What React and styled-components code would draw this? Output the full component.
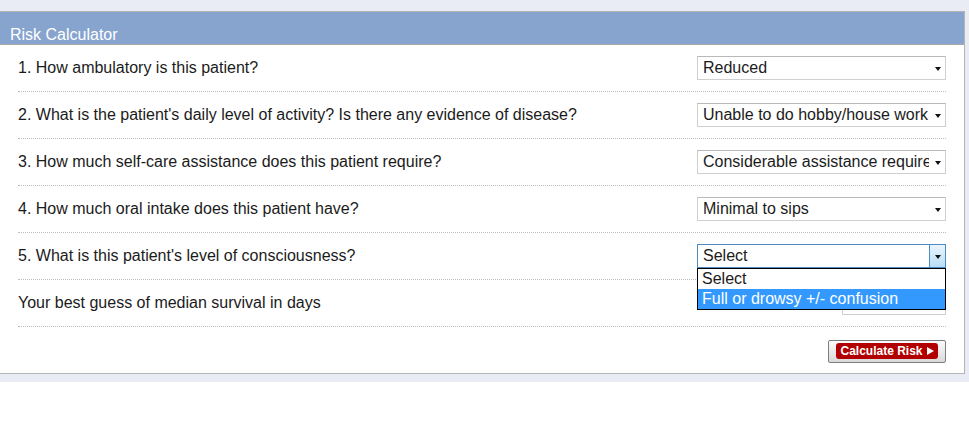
import React from "react";
import styled, { createGlobalStyle } from "styled-components";

const Global = createGlobalStyle`
  html, body { margin: 0; padding: 0; background: #ffffff; }
  body { font-family: "Liberation Sans", Arial, sans-serif; color: #1b1b1b; }
`;

const Page = styled.div`
  width: 969px;
  background: #e9ecf4;
  padding: 11px 4px 8px 0;
  box-sizing: border-box;
`;

const Panel = styled.div`
  background: #ffffff;
  border-top: 1px solid #b4b4b4;
  border-right: 1px solid #b4b4b4;
  border-bottom: 1px solid #b4b4b4;
`;

const Header = styled.div`
  height: 33px;
  background: #87a4cf;
  border-bottom: 1px solid #a9a9a9;
  color: #ffffff;
  font-size: 16px;
  padding: 14px 0 0 10px;
  box-sizing: border-box;
  line-height: 18px;
`;

const Rows = styled.div`
  padding: 0 18px;
`;

const Row = styled.div`
  height: 46px;
  display: flex;
  align-items: center;
  justify-content: space-between;
  border-bottom: 1px dotted #bdbdbd;
  font-size: 16px;
  position: relative;
  z-index: ${(p) => (p.$raised ? 2 : "auto")};
`;

const Label = styled.span`
  line-height: 18px;
`;

const SelectBox = styled.div`
  position: relative;
  width: 249px;
  height: 24px;
  box-sizing: border-box;
  border: 1px solid ${(p) => (p.$focus ? "#4b8cc4" : "#cfcfcf")};
  border-top-color: ${(p) => (p.$focus ? "#4b8cc4" : "#b9b9b9")};
  background: #fff;
  display: flex;
  align-items: center;
  font-size: 16px;
  color: #1b1b1b;
`;

const SelectText = styled.span`
  flex: 1;
  padding-left: 5px;
  white-space: nowrap;
  overflow: hidden;
  line-height: 22px;
`;

const ArrowArea = styled.span`
  width: 16px;
  height: 22px;
  flex: none;
  display: flex;
  align-items: center;
  justify-content: center;
  box-sizing: border-box;
  background: ${(p) => (p.$focus ? "linear-gradient(#eaf5fd, #b9ddf5)" : "transparent")};
  border-left: ${(p) => (p.$focus ? "1px solid #4b8cc4" : "1px solid transparent")};
`;

const Caret = styled.span`
  width: 0;
  height: 0;
  border-left: 3.5px solid transparent;
  border-right: 3.5px solid transparent;
  border-top: 4px solid #111;
  margin-top: 2px;
`;

const Menu = styled.div`
  position: absolute;
  top: 23px;
  left: -1px;
  width: 249px;
  box-sizing: border-box;
  border: 1px solid #000;
  background: #fff;
  z-index: 5;
`;

const Option = styled.div`
  height: 20px;
  line-height: 20px;
  padding-left: 4px;
  font-size: 16px;
  background: ${(p) => (p.$active ? "#3399ff" : "#fff")};
  color: ${(p) => (p.$active ? "#fff" : "#1b1b1b")};
  white-space: nowrap;
`;

const TextInput = styled.div`
  width: 104px;
  height: 24px;
  box-sizing: border-box;
  border: 1px solid #cfcfcf;
  border-top-color: #b9b9b9;
  background: #fff;
`;

const ButtonRow = styled.div`
  height: 46px;
  display: flex;
  align-items: center;
  justify-content: flex-end;
  padding-top: 2px;
  box-sizing: border-box;
`;

const ButtonOuter = styled.button`
  width: 118px;
  height: 23px;
  box-sizing: border-box;
  border: 1px solid #7d7d7d;
  border-radius: 2px;
  background: linear-gradient(#fbfbfb, #d9d9d9);
  padding: 0;
  display: flex;
  align-items: center;
  justify-content: center;
  cursor: pointer;
`;

const ButtonInner = styled.span`
  width: 102px;
  height: 16px;
  border-radius: 3px;
  background: #b20000;
  color: #fff;
  font-family: "Liberation Sans", Arial, sans-serif;
  font-weight: bold;
  font-size: 12px;
  line-height: 16px;
  display: flex;
  align-items: center;
  justify-content: center;
  gap: 4px;
`;

const Play = styled.span`
  width: 0;
  height: 0;
  border-top: 4px solid transparent;
  border-bottom: 4px solid transparent;
  border-left: 7px solid #fff;
`;

function Select({ value, focus, options }) {
  return (
    <SelectBox $focus={focus}>
      <SelectText>{value}</SelectText>
      <ArrowArea $focus={focus}>
        <Caret />
      </ArrowArea>
      {options && (
        <Menu>
          {options.map((o, i) => (
            <Option key={o} $active={i === 1}>
              {o}
            </Option>
          ))}
        </Menu>
      )}
    </SelectBox>
  );
}

const questions = [
  ["1. How ambulatory is this patient?", "Reduced"],
  ["2. What is the patient's daily level of activity? Is there any evidence of disease?", "Unable to do hobby/house work"],
  ["3. How much self-care assistance does this patient require?", "Considerable assistance require"],
  ["4. How much oral intake does this patient have?", "Minimal to sips"],
];

export default function App() {
  return (
    <>
      <Global />
      <Page>
        <Panel>
          <Header>Risk Calculator</Header>
          <Rows>
            {questions.map(([q, v]) => (
              <Row key={q}>
                <Label>{q}</Label>
                <Select value={v} />
              </Row>
            ))}
            <Row $raised>
              <Label>5. What is this patient's level of consciousness?</Label>
              <Select value="Select" focus options={["Select", "Full or drowsy +/- confusion"]} />
            </Row>
            <Row>
              <Label>Your best guess of median survival in days</Label>
              <TextInput />
            </Row>
            <ButtonRow>
              <ButtonOuter>
                <ButtonInner>
                  Calculate Risk <Play />
                </ButtonInner>
              </ButtonOuter>
            </ButtonRow>
          </Rows>
        </Panel>
      </Page>
    </>
  );
}
